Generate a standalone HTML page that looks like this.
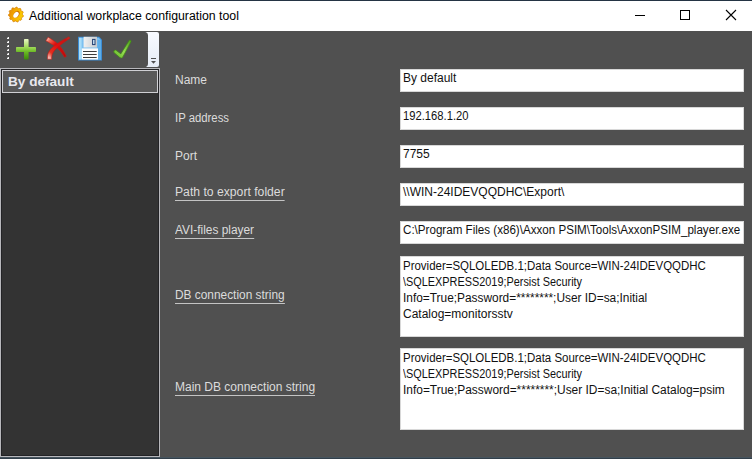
<!DOCTYPE html>
<html><head><meta charset="utf-8">
<style>
*{margin:0;padding:0;box-sizing:border-box}
html,body{width:752px;height:459px;overflow:hidden;background:#505050;font-family:"Liberation Sans",sans-serif}
.a{position:absolute;white-space:pre;transform-origin:0 0}
#top{left:0;top:0;width:752px;height:1px;background:#243444}
#title{left:0;top:1px;width:752px;height:30px;background:#fff}
#ttext{left:29px;top:8px;font-size:12.3px;line-height:16px;color:#000}
#tool{left:0;top:31px;width:752px;height:37px;background:#505050}
#list{left:0;top:68px;width:160px;height:389px;border:1px solid #b8b8bc;box-shadow:inset 0 0 0 1px #232326;background:#333}
#sel{left:2px;top:70px;width:156px;height:23px;border:1px solid #d0d0d4;background:#595959}
#seltext{left:8px;top:74px;font-weight:bold;font-size:13.6px;line-height:16px;color:#e8e8ee}
#bottom{left:0;top:457px;width:752px;height:2px;background:linear-gradient(#46545e 50%,#323f4a 50%)}
.lbl{left:175px;font-size:12px;line-height:16px;color:#dcdcdc}
.lnk{border-bottom:1px solid #c4c4c4}
.box{left:400px;width:344px;background:#fff;border:1px solid #d8d8d8}
.txt{left:403px;font-size:12px;line-height:16px;color:#111}
</style></head><body>
<div class="a" id="top"></div>
<div class="a" id="title"></div>
<svg class="a" style="left:0;top:0" width="752" height="31">
 <defs><linearGradient id="gg" x1="0" y1="0.3" x2="1" y2="0.6"><stop offset="0" stop-color="#e88a00"/><stop offset="0.5" stop-color="#f5b000"/><stop offset="1" stop-color="#fcd200"/></linearGradient></defs>
 <path d="M16.00,7.10 L17.07,7.18 L17.83,8.36 L18.70,8.69 L20.05,8.29 L20.91,8.93 L20.91,10.34 L21.47,11.09 L22.82,11.48 L23.20,12.49 L22.43,13.67 L22.50,14.60 L23.42,15.67 L23.20,16.71 L21.91,17.30 L21.47,18.11 L21.67,19.51 L20.91,20.27 L19.51,20.07 L18.70,20.51 L18.11,21.80 L17.07,22.02 L16.00,21.10 L15.07,21.03 L13.89,21.80 L12.88,21.42 L12.49,20.07 L11.74,19.51 L10.33,19.51 L9.69,18.65 L10.09,17.30 L9.76,16.43 L8.58,15.67 L8.50,14.60 L9.57,13.67 L9.76,12.77 L9.18,11.48 L9.69,10.55 L11.09,10.34 L11.74,9.69 L11.95,8.29 L12.88,7.78 L14.17,8.36 L15.07,8.17Z" fill="url(#gg)" stroke="#d47c00" stroke-width="0.7"/>
 <ellipse cx="16.5" cy="14.3" rx="2.6" ry="3.8" transform="rotate(38 16.5 14.3)" fill="#d07000"/>
 <ellipse cx="16" cy="14.8" rx="2.2" ry="3.3" transform="rotate(38 16 14.8)" fill="#fff"/>
 <line x1="635" y1="15.5" x2="645" y2="15.5" stroke="#000" stroke-width="1"/>
 <rect x="680.5" y="10.5" width="9" height="9" fill="none" stroke="#000" stroke-width="1"/>
 <path d="M726 10L736 20M736 10L726 20" stroke="#000" stroke-width="1.1"/>
</svg>
<div class="a" id="ttext">Additional workplace configuration tool</div>

<svg class="a" style="left:0;top:31px" width="160" height="37" viewBox="0 31 160 37">
 <defs>
  <linearGradient id="gp" gradientUnits="userSpaceOnUse" x1="0" y1="39" x2="0" y2="59.6">
   <stop offset="0" stop-color="#eaf8c4"/><stop offset="0.38" stop-color="#a4dc5c"/><stop offset="0.62" stop-color="#6cba26"/><stop offset="1" stop-color="#3a8a08"/>
  </linearGradient>
  <linearGradient id="gph" x1="0" y1="0" x2="0" y2="1">
   <stop offset="0" stop-color="#b6e67a"/><stop offset="1" stop-color="#5aad1a"/>
  </linearGradient>
  <linearGradient id="gx" gradientUnits="userSpaceOnUse" x1="46" y1="38" x2="66" y2="57">
   <stop offset="0" stop-color="#fde0d8"/><stop offset="0.16" stop-color="#f26a54"/><stop offset="0.38" stop-color="#e01010"/><stop offset="1" stop-color="#b80a0a"/>
  </linearGradient>
  <linearGradient id="gx2" gradientUnits="userSpaceOnUse" x1="69" y1="37" x2="49" y2="59">
   <stop offset="0" stop-color="#c83028"/><stop offset="0.15" stop-color="#c81414"/><stop offset="0.5" stop-color="#e01010"/><stop offset="0.8" stop-color="#e43020"/><stop offset="1" stop-color="#fcd4cc"/>
  </linearGradient>
  <linearGradient id="gfl" x1="0" y1="0" x2="1" y2="0">
   <stop offset="0" stop-color="#f0f0f0"/><stop offset="1" stop-color="#c8ccd0"/>
  </linearGradient>
  <linearGradient id="gck" gradientUnits="userSpaceOnUse" x1="114" y1="57" x2="131" y2="40">
   <stop offset="0" stop-color="#66b82a"/><stop offset="0.45" stop-color="#96dc52"/><stop offset="1" stop-color="#4c9c1a"/>
  </linearGradient>
  <linearGradient id="gov" x1="0" y1="0" x2="0" y2="1">
   <stop offset="0" stop-color="#f8faff"/><stop offset="1" stop-color="#e6ecf6"/>
  </linearGradient>
 </defs>
 <g fill="#f4f4f4"><rect x="7" y="37" width="2" height="2"/><rect x="7" y="41" width="2" height="2"/><rect x="7" y="45" width="2" height="2"/><rect x="7" y="49" width="2" height="2"/><rect x="7" y="53" width="2" height="2"/><rect x="7" y="57" width="2" height="2"/></g>
 <g fill="#8a8a8a"><rect x="7" y="37" width="1" height="1"/><rect x="7" y="41" width="1" height="1"/><rect x="7" y="45" width="1" height="1"/><rect x="7" y="49" width="1" height="1"/><rect x="7" y="53" width="1" height="1"/><rect x="7" y="57" width="1" height="1"/></g>
 <path d="M24.8,39 L27.8,39 Q28.6,39 28.6,39.8 L28.6,47 L35.2,47 Q36,47 36,47.8 L36,51.2 Q36,52 35.2,52 L28.6,52 L28.6,58.8 Q28.6,59.6 27.8,59.6 L24.8,59.6 Q24,59.6 24,58.8 L24,52 L16.8,52 Q16,52 16,51.2 L16,47.8 Q16,47 16.8,47 L24,47 L24,39.8 Q24,39 24.8,39 Z" fill="url(#gp)"/>
 <path d="M45.93,40.81 L46.49,41.13 L47.25,41.56 L48.14,42.06 L49.09,42.61 L50.04,43.16 L50.93,43.69 L51.78,44.19 L52.65,44.69 L53.49,45.17 L54.31,45.67 L55.10,46.20 L55.87,46.77 L56.64,47.41 L57.41,48.11 L58.17,48.84 L58.93,49.63 L59.68,50.45 L60.41,51.30 L61.18,52.27 L61.99,53.39 L62.80,54.57 L63.55,55.68 L64.18,56.64 L64.65,57.32 L66.35,56.28 L65.96,55.56 L65.42,54.56 L64.76,53.36 L64.05,52.08 L63.31,50.82 L62.59,49.70 L61.89,48.70 L61.18,47.74 L60.45,46.81 L59.70,45.91 L58.93,45.05 L58.13,44.23 L57.29,43.45 L56.43,42.73 L55.57,42.08 L54.72,41.46 L53.89,40.88 L53.07,40.31 L52.18,39.71 L51.21,39.09 L50.24,38.50 L49.35,37.96 L48.60,37.52 L48.07,37.19Z" fill="url(#gx)" stroke="#cc1a12" stroke-width="0.6" stroke-linejoin="round"/>
 <path d="M68.94,36.83 L68.22,37.22 L67.22,37.77 L66.03,38.41 L64.75,39.12 L63.49,39.83 L62.34,40.50 L61.29,41.12 L60.26,41.75 L59.24,42.38 L58.23,43.02 L57.25,43.68 L56.30,44.35 L55.37,45.04 L54.44,45.74 L53.53,46.46 L52.64,47.21 L51.80,47.99 L51.04,48.79 L50.36,49.60 L49.75,50.42 L49.20,51.25 L48.73,52.11 L48.33,52.98 L47.98,53.91 L47.74,54.96 L47.62,56.04 L47.58,57.05 L47.59,57.94 L47.61,58.64 L47.60,59.13 L51.60,59.27 L51.63,58.73 L51.66,58.01 L51.70,57.21 L51.77,56.41 L51.87,55.69 L52.02,55.09 L52.21,54.50 L52.46,53.86 L52.75,53.21 L53.09,52.55 L53.50,51.89 L53.96,51.21 L54.51,50.53 L55.15,49.82 L55.87,49.09 L56.66,48.35 L57.47,47.59 L58.30,46.85 L59.13,46.11 L59.98,45.39 L60.86,44.66 L61.77,43.93 L62.71,43.21 L63.66,42.50 L64.71,41.76 L65.88,40.96 L67.08,40.17 L68.21,39.44 L69.17,38.82 L69.86,38.37Z" fill="url(#gx2)" stroke="#c81810" stroke-width="0.6" stroke-linejoin="round"/>
 <path d="M78,36.8 L99.2,36.8 L102,39.8 L102,60.5 L78,60.5 Z" fill="#3c8cd4"/>
 <path d="M79,37.8 L98.8,37.8 L101,40.2 L101,59.5 L79,59.5 Z" fill="#7cc0f0"/>
 <rect x="79" y="37.8" width="2.6" height="21.7" fill="#a8dcf8"/>
 <rect x="97.4" y="40" width="3.6" height="19.5" fill="#5eaee8"/>
 <rect x="83.6" y="36.8" width="13.4" height="10.7" fill="url(#gfl)"/>
 <rect x="92.6" y="39.4" width="2.4" height="5.2" fill="#d0e8f8" stroke="#1e3c70" stroke-width="1"/>
 <rect x="81.8" y="48.4" width="16.2" height="11.1" fill="#fcfcfc"/>
 <g fill="#3c3c3c"><rect x="83" y="51" width="13.7" height="1"/><rect x="83" y="54" width="13.7" height="1"/><rect x="83" y="57" width="13.7" height="1"/></g>
 <path d="M113.9,52.4 Q113,50.6 115.7,50 L120.8,53.9 L129.3,40.3 Q130.6,39.3 131.1,41.4 L122.7,57.2 Q121.4,58.7 119.9,57.6 Z" fill="url(#gck)" stroke="#3f8a14" stroke-width="0.7" stroke-linejoin="round"/>
 <path d="M145.3,32 L157,32 Q159,32 159,34 L159,65 Q159,67 157,67 L146,67 Q148,66 148,64 L148,35 Q148,32.5 145.3,32 Z" fill="url(#gov)"/>
 <rect x="151" y="58" width="5" height="1" fill="#505050"/>
 <path d="M151,61 L156,61 L153.5,63.8 Z" fill="#505050"/>
</svg>
<div class="a" id="list"></div>
<div class="a" id="sel"></div>
<div class="a" id="seltext">By default</div>

<div class="a lbl" style="top:72px">Name</div>
<div class="a lbl" style="top:110px;transform:scaleX(0.945)">IP address</div>
<div class="a lbl" style="top:148px">Port</div>
<div class="a lbl lnk" style="top:184px;transform:scaleX(1.015)">Path to export folder</div>
<div class="a lbl lnk" style="top:222px;transform:scaleX(0.99)">AVI-files player</div>
<div class="a lbl lnk" style="top:287px;transform:scaleX(0.99)">DB connection string</div>
<div class="a lbl lnk" style="top:379px">Main DB connection string</div>

<div class="a box" style="top:69px;height:23px"></div>
<div class="a box" style="top:107px;height:23px"></div>
<div class="a box" style="top:145px;height:23px"></div>
<div class="a box" style="top:183px;height:23px"></div>
<div class="a box" style="top:221px;height:23px"></div>
<div class="a box" style="top:256px;height:81px"></div>
<div class="a box" style="top:348px;height:82px"></div>

<div class="a txt" style="top:70px">By default</div>
<div class="a txt" style="top:108px;transform:scaleX(0.935)">192.168.1.20</div>
<div class="a txt" style="top:146px">7755</div>
<div class="a txt" style="top:184px">\\WIN-24IDEVQQDHC\Export\</div>
<div class="a txt" style="top:222px;transform:scaleX(0.967)">C:\Program Files (x86)\Axxon PSIM\Tools\AxxonPSIM_player.exe</div>
<div class="a txt" style="top:258px;transform:scaleX(0.956)">Provider=SQLOLEDB.1;Data Source=WIN-24IDEVQQDHC</div>
<div class="a txt" style="top:274px;transform:scaleX(0.907)">\SQLEXPRESS2019;Persist Security</div>
<div class="a txt" style="top:290px;transform:scaleX(0.99)">Info=True;Password=********;User ID=sa;Initial</div>
<div class="a txt" style="top:306px">Catalog=monitorsstv</div>
<div class="a txt" style="top:350px;transform:scaleX(0.956)">Provider=SQLOLEDB.1;Data Source=WIN-24IDEVQQDHC</div>
<div class="a txt" style="top:366px;transform:scaleX(0.907)">\SQLEXPRESS2019;Persist Security</div>
<div class="a txt" style="top:382px;transform:scaleX(0.994)">Info=True;Password=********;User ID=sa;Initial Catalog=psim</div>

<div class="a" id="bottom"></div>
</body></html>
